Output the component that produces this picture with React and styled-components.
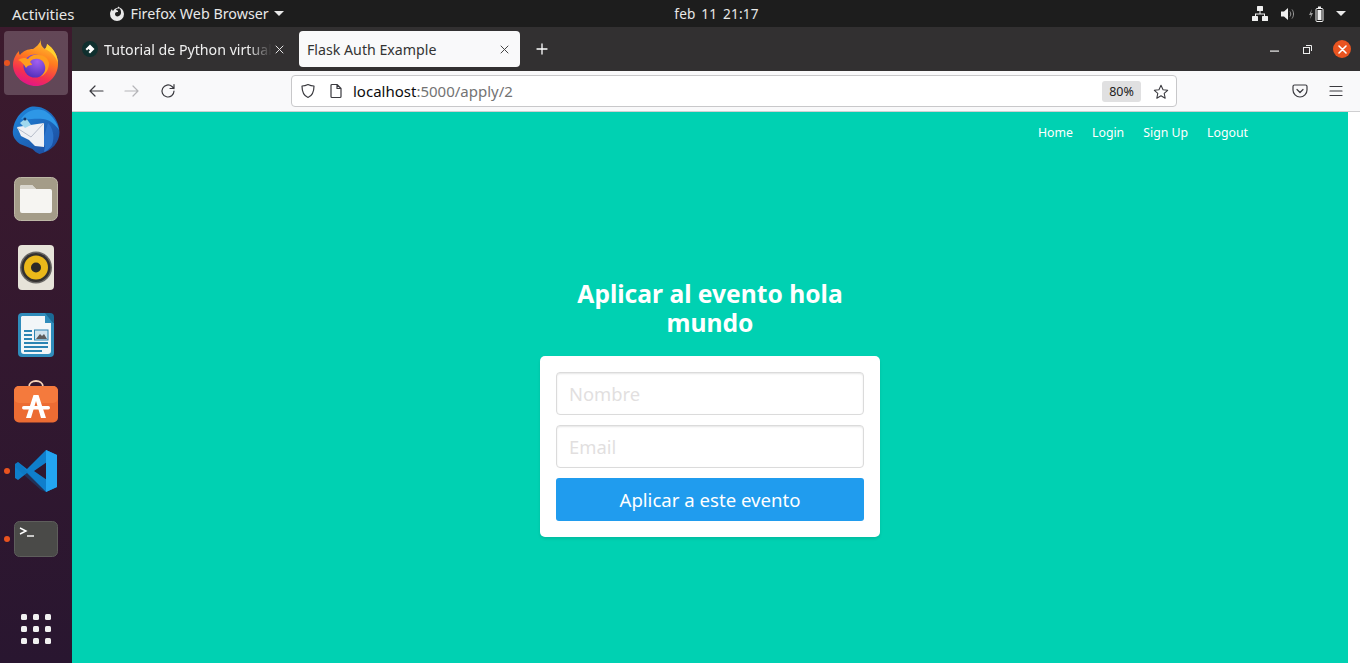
import React from 'react'
import styled, { createGlobalStyle } from 'styled-components'

const UI_FONT = '"Noto Sans", "Open Sans", sans-serif'

const GlobalStyle = createGlobalStyle`
  html, body {
    margin: 0;
    height: 100%;
    overflow: hidden;
  }
  #root {
    height: 100%;
  }
  * {
    box-sizing: border-box;
  }
`

const Screen = styled.div`
  width: 1360px;
  height: 663px;
  display: flex;
  flex-direction: column;
  font-family: ${UI_FONT};
  overflow: hidden;
`

/* gnome top bar */
const TopBar = styled.div`
  height: 27px;
  flex: none;
  background: #1d1d1d;
  color: #e8e8e8;
  display: grid;
  grid-template-columns: 1fr auto 1fr;
  align-items: center;
  padding: 0 14px 0 12px;
`

const TopLeft = styled.div`
  display: flex;
  align-items: center;
  font-size: 15px;
`

const AppMenu = styled.div`
  display: flex;
  align-items: center;
  margin-left: 34px;
  gap: 6px;
  font-size: 14.3px;
`

const Clock = styled.div`
  font-size: 13.6px;
  letter-spacing: 0.2px;
  word-spacing: 2px;
  margin-left: 75px;
`

const Tray = styled.div`
  display: flex;
  align-items: center;
  justify-content: flex-end;
  gap: 13px;
`

const Caret = styled.span`
  width: 0;
  height: 0;
  border-left: 5px solid transparent;
  border-right: 5px solid transparent;
  border-top: 5px solid #e8e8e8;
  margin-left: ${p => p.$gap || 0}px;
`

const Body = styled.div`
  flex: 1;
  min-height: 0;
  display: flex;
`

/* launcher */
const Dock = styled.div`
  width: 72px;
  flex: none;
  background: linear-gradient(180deg, #3c1a2d 0%, #33182f 50%, #291630 100%);
  display: flex;
  flex-direction: column;
  align-items: center;
  padding: 4px 0 19px;
`

const DockItem = styled.div`
  position: relative;
  width: 64px;
  height: 64px;
  margin-bottom: 4px;
  flex: none;
  border-radius: 4px;
  display: flex;
  align-items: center;
  justify-content: center;
  background: ${p => (p.$active ? 'rgba(255, 255, 255, 0.2)' : 'transparent')};
`

const RunDot = styled.span`
  position: absolute;
  left: 0;
  top: 29px;
  width: 6px;
  height: 6px;
  border-radius: 50%;
  background: #e9531f;
`

const AppGrid = styled.div`
  margin-top: auto;
  display: grid;
  grid-template-columns: repeat(3, 6px);
  grid-auto-rows: 6px;
  gap: 6px;
`

const GridDot = styled.span`
  background: #f1f1f1;
  border-radius: 1.5px;
`

/* firefox window */
const Browser = styled.div`
  flex: 1;
  min-width: 0;
  display: flex;
  flex-direction: column;
`

const TabStrip = styled.div`
  height: 44px;
  flex: none;
  background: #323031;
  display: flex;
  align-items: center;
  padding-left: 2px;
  color: #f0f0f0;
`

const Tab = styled.div`
  width: ${p => p.$width}px;
  height: 36px;
  border-radius: 4px;
  display: flex;
  align-items: center;
  padding: 0 11px 0 8px;
  font-size: 14.2px;
  background: ${p => (p.$active ? '#f9f9fa' : 'transparent')};
  color: ${p => (p.$active ? '#333' : '#f0f0f0')};
  margin-right: ${p => p.$mr || 0}px;
`

const TabIcon = styled.span`
  width: 16px;
  height: 16px;
  flex: none;
  margin-right: 6px;
  display: flex;
`

const TabTitle = styled.span`
  flex: 1;
  min-width: 0;
  white-space: nowrap;
  mask-image: ${p => (p.$fade ? 'linear-gradient(90deg, #000 84%, transparent 98%)' : 'none')};
`

const WindowButtons = styled.div`
  margin-left: auto;
  display: flex;
  align-items: center;
`

const WindowButton = styled.div`
  width: ${p => p.$width}px;
  height: 18px;
  display: flex;
  align-items: center;
  justify-content: center;
`

const CloseCircle = styled.div`
  width: 18px;
  height: 18px;
  border-radius: 50%;
  background: #e95420;
  display: flex;
  align-items: center;
  justify-content: center;
`

const Toolbar = styled.div`
  height: 41px;
  flex: none;
  background: #f9f9fa;
  border-bottom: 1px solid #cfcfd1;
  display: flex;
  align-items: center;
  padding: 0 6px;
`

const NavButton = styled.div`
  width: 36px;
  height: 32px;
  flex: none;
  display: flex;
  align-items: center;
  justify-content: center;
`

const NewTabButton = styled(NavButton)`
  margin-left: 4px;
`

const UrlBar = styled.div`
  width: 886px;
  height: 32px;
  margin-left: 105px;
  background: #fff;
  border: 1px solid #c8c8ca;
  border-radius: 4px;
  display: flex;
  align-items: center;
  padding: 0 7px 0 8px;
  font-size: 15px;
`

const UrlIcon = styled.span`
  display: flex;
  width: 16px;
  height: 16px;
  flex: none;
  margin-right: ${p => p.$mr}px;
`

const Host = styled.span`
  color: #0c0c0d;
`

const UrlRest = styled.span`
  color: #737373;
`

const ZoomBadge = styled.span`
  margin-left: auto;
  width: 39px;
  height: 21px;
  border-radius: 3px;
  background: #e0e0e1;
  color: #222;
  font-size: 12.5px;
  display: flex;
  align-items: center;
  justify-content: center;
  margin-right: 12px;
`

const ToolbarEnd = styled.div`
  margin-left: auto;
  display: flex;
`

/* the flask page */
const Viewport = styled.div`
  flex: 1;
  min-height: 0;
  display: flex;
  background: #fff;
`

const Page = styled.div`
  width: 1276px;
  flex: none;
  background: #00d1b2;
  display: flex;
  flex-direction: column;
`

const PageNav = styled.nav`
  height: 41px;
  flex: none;
  display: flex;
  align-items: center;
  justify-content: flex-end;
  gap: 19px;
  padding-right: 100px;
`

const PageLink = styled.a`
  color: #fff;
  font-size: 12.3px;
`

const Hero = styled.main`
  flex: 1;
  display: flex;
  flex-direction: column;
  align-items: center;
  justify-content: center;
`

const Title = styled.h3`
  width: 340px;
  margin: 0 0 19px;
  padding: 0 30px;
  color: #fff;
  font-size: 24.6px;
  line-height: 29px;
  font-weight: 700;
  text-align: center;
`

const FormBox = styled.form`
  width: 340px;
  background: #fff;
  border-radius: 5px;
  padding: 16px;
  box-shadow: 0 2px 3px rgba(10, 10, 10, 0.1);
  display: flex;
  flex-direction: column;
  gap: 10px;
`

const Field = styled.input`
  display: block;
  width: 100%;
  height: 43px;
  border: 1px solid #dbdbdb;
  border-radius: 4px;
  box-shadow: inset 0 1px 2px rgba(10, 10, 10, 0.1);
  padding: 0 12px;
  font-family: ${UI_FONT};
  font-size: 18.4px;
  background: #fff;
  &::placeholder {
    color: #e2dfdf;
    opacity: 1;
  }
`

const SubmitButton = styled.button`
  width: 100%;
  height: 43px;
  border: none;
  border-radius: 3px;
  background: #209cee;
  color: #fff;
  font-family: ${UI_FONT};
  font-size: 18.6px;
  padding: 0;
`

/* dock icons */
const FirefoxIcon = () => (
  <svg width="48" height="48" viewBox="0 0 48 48">
    <defs>
      <linearGradient id="ffBody" x1="0.7" y1="0" x2="0.35" y2="1">
        <stop offset="0" stopColor="#ffc92e" />
        <stop offset="0.42" stopColor="#ff7a1f" />
        <stop offset="0.75" stopColor="#f5304f" />
        <stop offset="1" stopColor="#e0148c" />
      </linearGradient>
      <radialGradient id="ffGlobe" cx="0.6" cy="0.3" r="0.8">
        <stop offset="0" stopColor="#a25ff0" />
        <stop offset="1" stopColor="#4a2bb5" />
      </radialGradient>
    </defs>
    <path d="M29 0c-1 5 1 8 4 10 1-1 2-3 2-5 6 4 11 11 11 20 0 12-10 22-22 22S1 37 1 26c0-6 3-11 6-14 0 2 0 3 1 4 3-4 8-6 13-6 3-2 7-5 8-10z" fill="url(#ffBody)" />
    <circle cx="23" cy="27" r="11.500" fill="url(#ffGlobe)" />
    <path d="M6 21c3-2 7-3 10-1 2-3 6-5 11-4 5 0 9 3 10 8 0 7-4 12-9 14 4-3 6-7 5-11-1-5-5-8-10-7-2 0-4 1-5 3 1 1 2 2 2 3-3 0-5 1-6 3-2-4-5-7-8-8z" fill="#ff9d1e" />
    <path d="M33 10c1-1 2-3 2-5 6 4 11 11 11 20-1-6-6-12-13-15z" fill="#ffd02f" />
  </svg>
)

const ThunderbirdIcon = () => (
  <svg width="48" height="50" viewBox="0 0 48 50">
    <defs>
      <linearGradient id="tbBlue" x1="0.1" y1="0" x2="0.9" y2="1">
        <stop offset="0" stopColor="#1e86dc" />
        <stop offset="1" stopColor="#1d4a9c" />
      </linearGradient>
    </defs>
    <path d="M18 1C32-2 47 10 47.500 26c0 10-7 19-20 22-3-1-5-3-7-5L8 38C3 34 0 30 1 24 2 14 8 5 18 1z" fill="url(#tbBlue)" />
    <path d="M9 13C14 5 24 1 33 5c7 4 12 11 14 19-4-6-9-10-16-11-8-1-15 1-22 0z" fill="#2e97e6" />
    <path d="M36 17c5 5 7 14 4 22-2 3-5 6-8 7l1-6-3-3z" fill="#2b74cc" />
    <path d="M5 21l27-4v24l-9-1-6-6-8-4z" fill="#eef0f4" />
    <path d="M5 22l14 9 13-14" fill="none" stroke="#b6bdca" strokeWidth="1" />
    <path d="M8 17l6-5 5 7-6 3z" fill="#9fd8ee" />
    <circle cx="13" cy="13" r="1.600" fill="#123a6d" />
  </svg>
)

const FilesIcon = () => (
  <svg width="44" height="44" viewBox="0 0 44 44">
    <rect x="0.500" y="0.500" width="43" height="43" rx="6" fill="#a49c88" stroke="#bdb7a6" />
    <path d="M6 10a2 2 0 0 1 2-2h10l4 4h14a2 2 0 0 1 2 2v20a2 2 0 0 1-2 2H8a2 2 0 0 1-2-2z" fill="#f6f5f2" />
    <path d="M6 10a2 2 0 0 1 2-2h10l4 4H6z" fill="#d9d6cd" />
  </svg>
)

const RhythmboxIcon = () => (
  <svg width="36" height="45" viewBox="0 0 36 45">
    <rect width="36" height="45" rx="4" fill="#e6e3d9" />
    <circle cx="18" cy="22.500" r="16" fill="#6a6865" />
    <circle cx="18" cy="22.500" r="14.500" fill="#33312f" />
    <circle cx="18" cy="22.500" r="12" fill="#eab81a" />
    <circle cx="18" cy="22.500" r="5" fill="#2b2a28" />
  </svg>
)

const WriterIcon = () => (
  <svg width="36" height="44" viewBox="0 0 36 44">
    <path d="M4 0h24l8 8v32a4 4 0 0 1-4 4H4a4 4 0 0 1-4-4V4a4 4 0 0 1 4-4z" fill="#2f8cbb" />
    <path d="M4 3h23v7h6v28a3 3 0 0 1-3 3H6a3 3 0 0 1-3-3V4z" fill="#f2f6f8" />
    <path d="M27 0h5a4 4 0 0 1 4 4v6h-1z" fill="#1b6a95" />
    <path d="M6 17h8v2H6zM6 21h8v2H6zM6 25h8v2H6zM6 29h24v2H6zM6 33h24v2H6zM6 37h18v2H6z" fill="#2b84b3" />
    <rect x="16.500" y="17" width="13.500" height="10" fill="#cfe3ee" stroke="#2b84b3" />
    <path d="M18 26l4-5 2 2 2-2 3 5z" fill="#5c5c5c" />
  </svg>
)

const StoreIcon = () => (
  <svg width="44" height="47" viewBox="0 0 44 47">
    <path d="M15 7c0-8 14-8 14 0" fill="none" stroke="#f6d3b8" strokeWidth="1.800" />
    <rect y="6" width="44" height="36.500" rx="5" fill="#ec6c33" />
    <rect y="6" width="44" height="17" rx="5" fill="#f47a3d" />
    <path d="M19.500 15h5l7.500 23h-5L22 21l-5 17h-5z" fill="#fff" />
    <rect x="8" y="26" width="28" height="3.400" rx="1.700" fill="#fff" />
  </svg>
)

const VsCodeIcon = () => (
  <svg width="44" height="44" viewBox="0 0 44 44">
    <path d="M32 1L13 20 4 13 1 15v14l3 2 9-7 19 19 11-5V6zM33 13v18L20 22z" fill="#0f7fcc" fillRule="evenodd" />
    <path d="M32 1l11 5v32l-11 5z" fill="#23a5f1" />
    <path d="M1 15l3-2 28 30-5-2L1 18z" fill="#0a6cb3" opacity="0.3" />
  </svg>
)

const TerminalIcon = () => (
  <svg width="44" height="36" viewBox="0 0 44 36">
    <rect x="0.500" y="0.500" width="43" height="35" rx="5" fill="#4a4a48" stroke="#5e5e5c" />
    <path d="M6 7l6 3-6 3" fill="none" stroke="#fff" strokeWidth="1.400" />
    <path d="M13 15h7" stroke="#fff" strokeWidth="1.400" />
  </svg>
)

/* small toolbar glyphs */
const Glyph = ({ w = 16, h = 16, stroke = '#3a3a3f', sw = 1.2, children }) => (
  <svg width={w} height={h} viewBox={`0 0 ${w} ${h}`} fill="none" stroke={stroke} strokeWidth={sw} strokeLinecap="round" strokeLinejoin="round">
    {children}
  </svg>
)

const CloseGlyph = ({ stroke, sw = 1 }) => (
  <Glyph w={9} h={9} stroke={stroke} sw={sw}>
    <path d="M1 1l7 7M8 1L1 8" />
  </Glyph>
)

const App = () => {
  return (
    <Screen>
      <GlobalStyle />
      <TopBar>
        <TopLeft>
          Activities
          <AppMenu>
            <svg width="16" height="16" viewBox="0 0 16 16">
              <path d="M8 1a7 7 0 1 1-7 7c0-2 1-4 2-5 0 1 1 2 1 2 1-2 3-3 4-3 1-1 2-1 2-2 0 2 0 2 1 3-2-1-4 0-4 1 2 0 2 1 2 2-1 0-3 0-3 2s2 3 4 2c2-1 2-3 2-4 0-3-2-5-4-5z" fill="#e8e8e8" />
            </svg>
            Firefox Web Browser
            <Caret $gap={-1} />
          </AppMenu>
        </TopLeft>
        <Clock>feb 11 21:17</Clock>
        <Tray>
          <svg width="16" height="15" viewBox="0 0 16 15" fill="#f0f0f0">
            <rect x="5" y="0" width="6" height="5" rx="0.500" />
            <rect x="0" y="10" width="6" height="5" rx="0.500" />
            <rect x="10" y="10" width="6" height="5" rx="0.500" />
            <path d="M7.500 5h1v2.500H13V10h-1V8.500H4V10H3V7.500h4.500z" />
          </svg>
          <svg width="15" height="14" viewBox="0 0 15 14">
            <path d="M0 4.500h3L7 1v12L3 9.500H0z" fill="#f0f0f0" />
            <path d="M9 4.500c1 1.500 1 3.500 0 5M11 2.500c2 2.500 2 6.500 0 9" fill="none" stroke="#9a9a9a" />
          </svg>
          <svg width="15" height="16" viewBox="0 0 15 16">
            <path d="M3 3L0 9h2l-1 4 3-6H2z" fill="#9a9a9a" />
            <rect x="7" y="2.500" width="7" height="13" rx="1" fill="#1d1d1d" stroke="#f0f0f0" />
            <rect x="9" y="0.500" width="3" height="2" fill="#f0f0f0" />
            <rect x="8.500" y="4" width="4" height="10" fill="#f0f0f0" />
          </svg>
          <Caret $gap={-1} />
        </Tray>
      </TopBar>
      <Body>
        <Dock>
          <DockItem $active>
            <RunDot />
            <FirefoxIcon />
          </DockItem>
          <DockItem><ThunderbirdIcon /></DockItem>
          <DockItem><FilesIcon /></DockItem>
          <DockItem><RhythmboxIcon /></DockItem>
          <DockItem><WriterIcon /></DockItem>
          <DockItem><StoreIcon /></DockItem>
          <DockItem><RunDot /><VsCodeIcon /></DockItem>
          <DockItem><RunDot /><TerminalIcon /></DockItem>
          <AppGrid>
            {Array.from({ length: 9 }).map((_, i) => <GridDot key={i} />)}
          </AppGrid>
        </Dock>
        <Browser>
          <TabStrip>
            <Tab $width={221} $mr={4}>
              <TabIcon>
                <svg width="16" height="16" viewBox="0 0 16 16">
                  <circle cx="8" cy="8" r="8" fill="#0f2f2e" />
                  <path d="M8 3.500L12.500 8 8 12.500 6.500 11 8 9.500 6.500 8 5 9.500 3.500 8z" fill="#fff" />
                </svg>
              </TabIcon>
              <TabTitle $fade>Tutorial de Python virtual</TabTitle>
              <CloseGlyph stroke="#e6e6e6" />
            </Tab>
            <Tab $width={221} $active>
              <TabTitle>Flask Auth Example</TabTitle>
              <CloseGlyph stroke="#444" />
            </Tab>
            <NewTabButton>
              <Glyph w={12} h={12} stroke="#fff" sw={1.300}>
                <path d="M6 1v10M1 6h10" />
              </Glyph>
            </NewTabButton>
            <WindowButtons>
              <WindowButton $width={33}>
                <svg width="9" height="5" viewBox="0 0 9 5"><rect y="3.500" width="9" height="1.200" fill="#eee" /></svg>
              </WindowButton>
              <WindowButton $width={33}>
                <svg width="9" height="9" viewBox="0 0 9 9" fill="none" stroke="#eee">
                  <rect x="0.500" y="2.500" width="6" height="6" />
                  <path d="M3 0.500h5.500V6" />
                </svg>
              </WindowButton>
              <WindowButton $width={36}>
                <CloseCircle><CloseGlyph stroke="#fff" sw={1.6} /></CloseCircle>
              </WindowButton>
            </WindowButtons>
          </TabStrip>
          <Toolbar>
            <NavButton>
              <Glyph>
                <path d="M15 8H2M7 3L2 8l5 5" />
              </Glyph>
            </NavButton>
            <NavButton>
              <Glyph stroke="#b5b5b8">
                <path d="M1 8h13M9 3l5 5-5 5" />
              </Glyph>
            </NavButton>
            <NavButton>
              <Glyph>
                <path d="M14 8a6 6 0 1 1-2-4.500L14 5.500M14 1.500v4h-4" />
              </Glyph>
            </NavButton>
            <UrlBar>
              <UrlIcon $mr={12}>
                <Glyph>
                  <path d="M8 1.500c2 1 4 1.500 6 1.500 0 5-1 9.500-6 11.500C3 12.500 2 8 2 3c2 0 4-.5 6-1.500z" />
                </Glyph>
              </UrlIcon>
              <UrlIcon $mr={9}>
                <Glyph>
                  <path d="M3 2.500a1 1 0 0 1 1-1h5l4 4v8a1 1 0 0 1-1 1H4a1 1 0 0 1-1-1zM9 1.500v4h4" />
                </Glyph>
              </UrlIcon>
              <Host>localhost</Host>
              <UrlRest>:5000/apply/2</UrlRest>
              <ZoomBadge>80%</ZoomBadge>
              <UrlIcon $mr={0}>
                <Glyph w={18} h={18}>
                  <path d="M9 1.500l2.300 5 5.200.6-3.900 3.500 1.100 5.400L9 13.300 4.300 16l1.100-5.400L1.500 7.100l5.200-.6z" />
                </Glyph>
              </UrlIcon>
            </UrlBar>
            <ToolbarEnd>
              <NavButton>
                <Glyph>
                  <path d="M2.500 2h11A1.500 1.500 0 0 1 15 3.500V7a7 7 0 0 1-14 0V3.500A1.500 1.500 0 0 1 2.500 2zM5 6.500l3 3 3-3" />
                </Glyph>
              </NavButton>
              <NavButton>
                <Glyph>
                  <path d="M2 3.500h12M2 8h12M2 12.500h12" />
                </Glyph>
              </NavButton>
            </ToolbarEnd>
          </Toolbar>
          <Viewport>
            <Page>
              <PageNav>
                <PageLink>Home</PageLink>
                <PageLink>Login</PageLink>
                <PageLink>Sign Up</PageLink>
                <PageLink>Logout</PageLink>
              </PageNav>
              <Hero>
                <Title>Aplicar al evento hola mundo</Title>
                <FormBox>
                  <Field placeholder="Nombre" />
                  <Field placeholder="Email" />
                  <SubmitButton type="button">Aplicar a este evento</SubmitButton>
                </FormBox>
              </Hero>
            </Page>
          </Viewport>
        </Browser>
      </Body>
    </Screen>
  )
}

export default App
